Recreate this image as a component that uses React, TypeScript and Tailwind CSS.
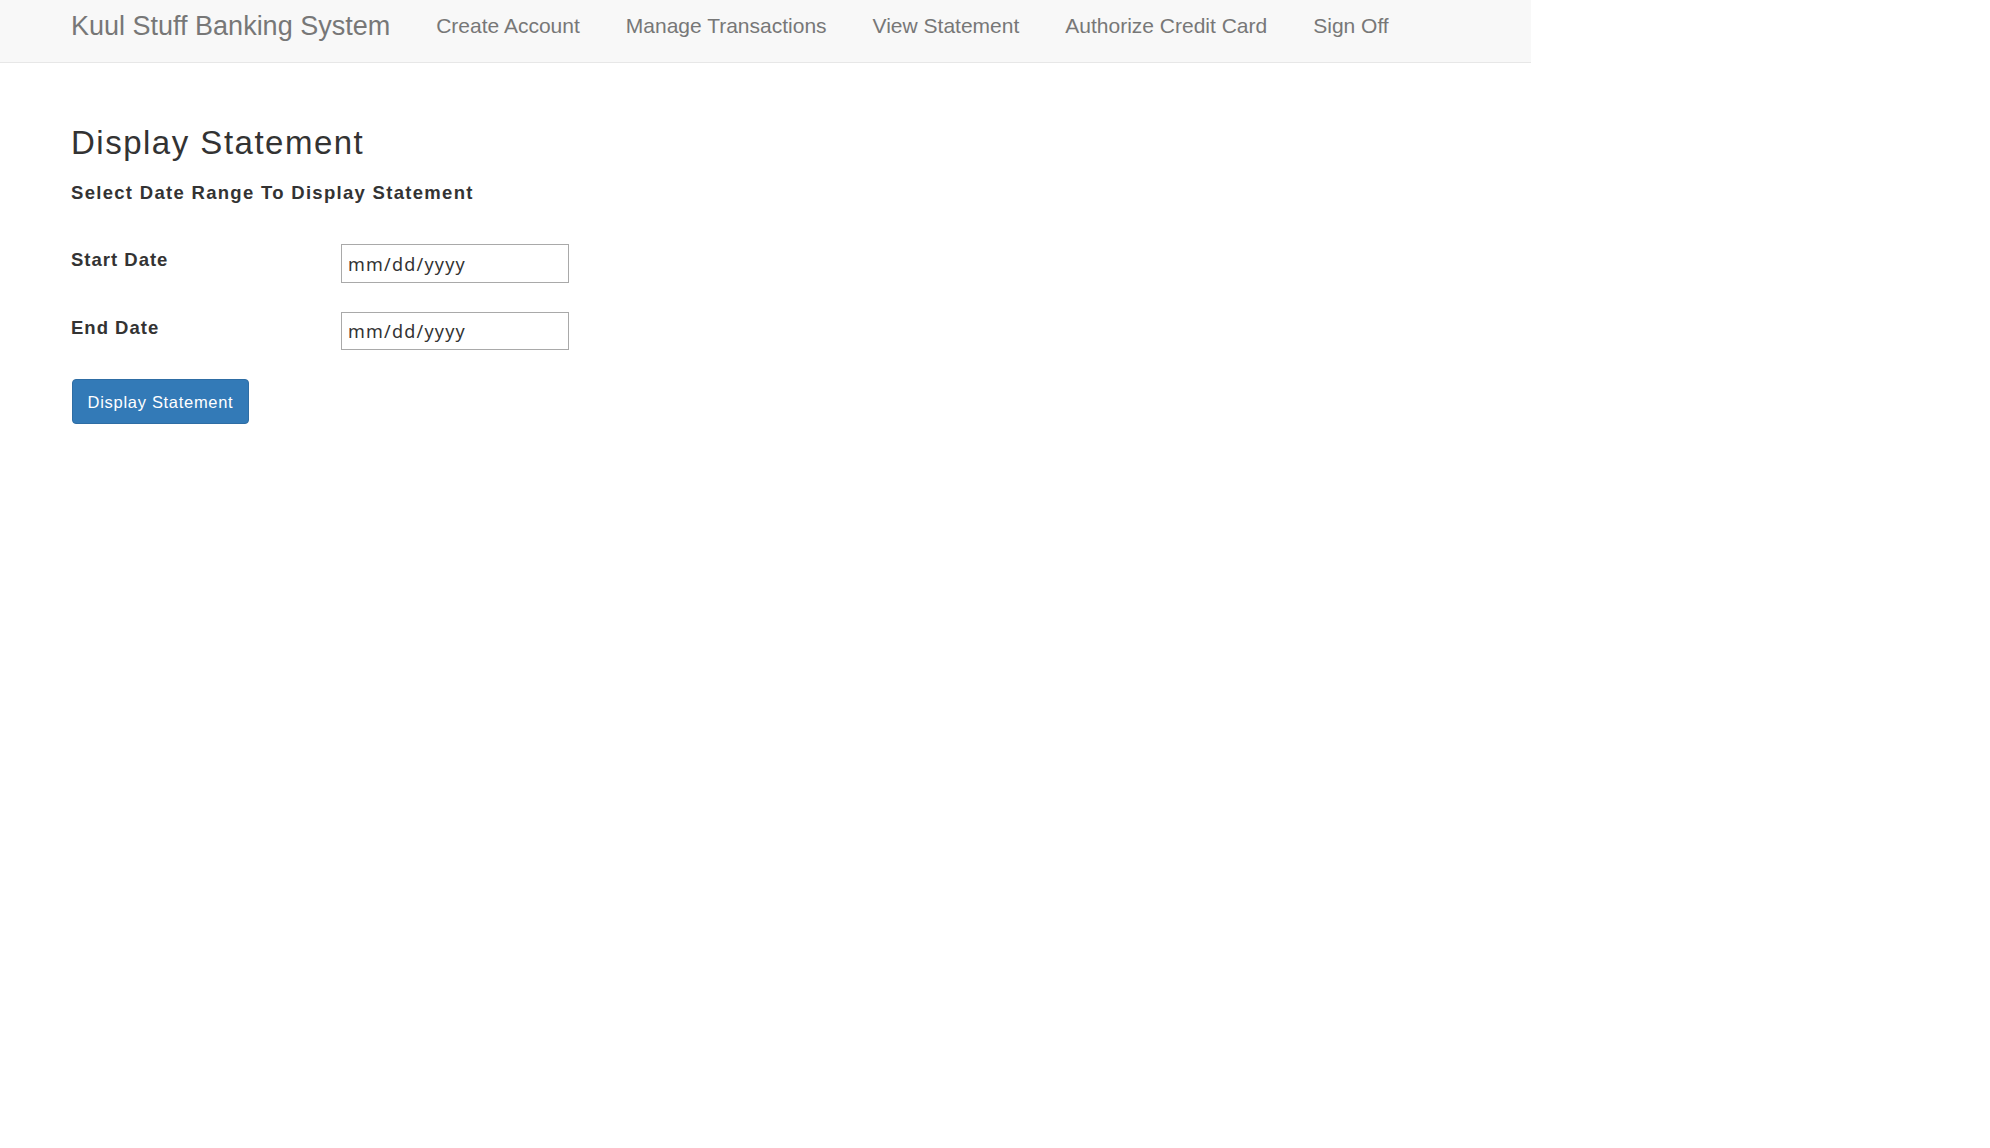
export default function App() {
  const navLinks = [
    "Create Account",
    "Manage Transactions",
    "View Statement",
    "Authorize Credit Card",
    "Sign Off",
  ];
  return (
    <div className="w-[1531px] min-h-[1148px] bg-white text-[#333] font-['Liberation_Sans',Arial,sans-serif]">
      <nav className="h-[63px] bg-[#f8f8f8] border-b border-[#e7e7e7] flex items-start pl-[71px] gap-[46px] text-[#777]">
        <span className="pt-[12px] text-[27px] leading-[28px] whitespace-nowrap">
          Kuul Stuff Banking System
        </span>
        {navLinks.map((l) => (
          <a
            key={l}
            href="#"
            className="pt-[14px] text-[21px] leading-[24px] whitespace-nowrap text-[#777]"
          >
            {l}
          </a>
        ))}
      </nav>

      <main className="pl-[71px] flex flex-col items-start">
        <h2 className="mt-[62px] text-[33px] leading-[36px] tracking-[1.5px] font-normal text-[#333]">
          Display Statement
        </h2>
        <h4 className="mt-[20px] text-[18.5px] leading-[24px] tracking-[1.3px] font-bold text-[#333]">
          Select Date Range To Display Statement
        </h4>

        <div className="mt-[39px] flex items-start">
          <label className="w-[270px] mt-[4px] text-[18.5px] leading-[24px] tracking-[1px] font-bold">
            Start Date
          </label>
          <input
            type="text"
            placeholder="mm/dd/yyyy"
            className="w-[228px] h-[39px] border border-[#a9a9a9] bg-white pl-[6px] text-[18px] tracking-[1.2px] font-['Noto_Sans','Open_Sans',sans-serif] text-[#333] placeholder:text-[#333] outline-none"
          />
        </div>

        <div className="mt-[29px] flex items-start">
          <label className="w-[270px] mt-[4px] text-[18.5px] leading-[24px] tracking-[1px] font-bold">
            End Date
          </label>
          <input
            type="text"
            placeholder="mm/dd/yyyy"
            className="w-[228px] h-[38px] border border-[#a9a9a9] bg-white pl-[6px] text-[18px] tracking-[1.2px] font-['Noto_Sans','Open_Sans',sans-serif] text-[#333] placeholder:text-[#333] outline-none"
          />
        </div>

        <button
          type="button"
          className="mt-[29px] ml-[1px] w-[177px] h-[45px] rounded-[4px] bg-[#337ab7] border border-[#2e6da4] text-white text-[16.5px] tracking-[0.7px] leading-[20px]"
        >
          Display Statement
        </button>
      </main>
    </div>
  );
}
